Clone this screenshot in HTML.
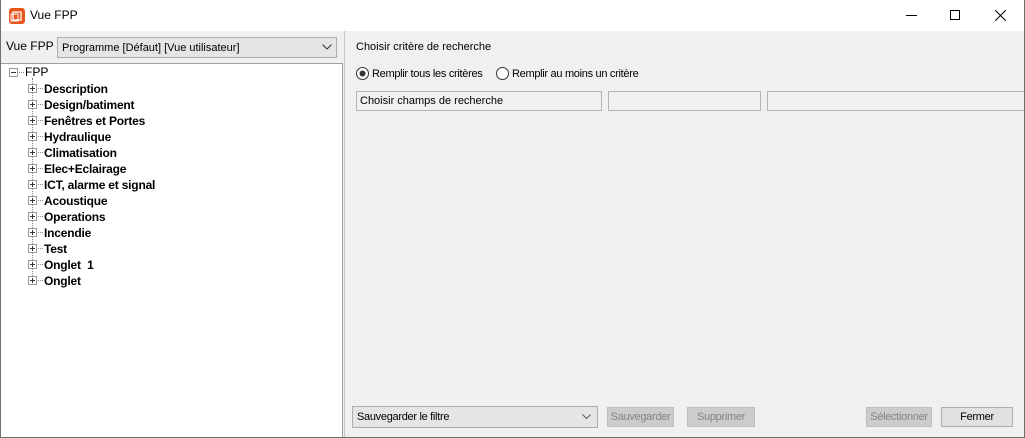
<!DOCTYPE html>
<html><head><meta charset="utf-8"><style>
*{margin:0;padding:0;box-sizing:border-box}
body{width:1025px;height:438px;overflow:hidden;background:#f0f0f0;font-family:"Liberation Sans",Arial,sans-serif;font-size:11px;color:#000;position:relative}
.abs{position:absolute;white-space:nowrap}
#win{position:absolute;left:0;top:0;width:1025px;height:438px;border:1px solid #707070;border-top:none}
#title{position:absolute;left:0;top:0;width:1025px;height:31px;background:#fff}
.item{position:absolute;left:44px;font-weight:bold;font-size:12px;letter-spacing:-0.2px;white-space:nowrap}
.pm{position:absolute;left:28px;width:9px;height:9px;border:1px solid #999;background:#fff}
.pm:before{content:"";position:absolute;left:1px;top:3px;width:5px;height:1px;background:#333}
.pm.p:after{content:"";position:absolute;left:3px;top:1px;width:1px;height:5px;background:#333}
.dh{position:absolute;left:38px;width:5px;border-top:1px dotted #888}
.box{position:absolute;top:91px;height:20px;border:1px solid #b4b4b4;background:#f0f0f0;padding:3px 3px;font-size:11px;white-space:nowrap}
.btn{position:absolute;top:407px;height:20px;border:1px solid #bfbfbf;background:#ccc;color:#838383;text-align:center;line-height:18px;font-size:11px;white-space:nowrap;letter-spacing:-0.3px}
</style></head><body>
<div id="title">
<svg class="abs" style="left:9px;top:8px" width="16" height="16"><rect x="0" y="0" width="16" height="16" rx="3" fill="#e8541c"/><rect x="4" y="4" width="8" height="8" fill="none" stroke="#fff" stroke-width="1.3"/><rect x="2" y="6" width="7" height="7" fill="none" stroke="#fff" stroke-width="1"/></svg>
<div class="abs" style="left:30px;top:8px;font-size:12px">Vue FPP</div>
<div class="abs" style="left:906px;top:15px;width:11px;height:1px;background:#000"></div>
<div class="abs" style="left:950px;top:10px;width:10px;height:10px;border:1px solid #000"></div>
<svg class="abs" style="left:995px;top:10px" width="11" height="11"><path d="M0 0L11 11M11 0L0 11" stroke="#000" stroke-width="1"/></svg>
</div>
<div class="abs" style="left:6px;top:39px;font-size:12px">Vue FPP</div>
<div class="abs" style="left:57px;top:37px;width:280px;height:21px;border:1px solid #adadad;background:#e5e5e5;padding:4px 4px;font-size:11px">Programme [Défaut] [Vue utilisateur]</div>
<svg class="abs" style="left:322px;top:44px" width="10" height="6"><path d="M0.5 0.5L5 5L9.5 0.5" stroke="#333" fill="none"/></svg>
<div class="abs" style="left:1px;top:63px;width:342px;height:374px;background:#fff;border-top:1px solid #a0a0a0;border-right:1px solid #a0a0a0"></div>
<div class="abs" style="left:344px;top:31px;width:1px;height:407px;background:#c8c8c8"></div>
<div class="pm" style="left:9px;top:68px"></div>
<div class="dh" style="left:19px;top:72px;width:5px"></div>
<div class="abs" style="left:25px;top:65px;font-size:12px">FPP</div>
<div class="abs" style="left:32px;top:78px;height:202px;border-left:1px dotted #888"></div>
<div style="position:absolute;left:0;top:0">
<div class="pm p" style="top:84px"></div><div class="dh" style="top:88px"></div><div class="item" style="top:82px">Description</div>
<div class="pm p" style="top:100px"></div><div class="dh" style="top:104px"></div><div class="item" style="top:98px">Design/batiment</div>
<div class="pm p" style="top:116px"></div><div class="dh" style="top:120px"></div><div class="item" style="top:114px">Fenêtres et Portes</div>
<div class="pm p" style="top:132px"></div><div class="dh" style="top:136px"></div><div class="item" style="top:130px">Hydraulique</div>
<div class="pm p" style="top:148px"></div><div class="dh" style="top:152px"></div><div class="item" style="top:146px">Climatisation</div>
<div class="pm p" style="top:164px"></div><div class="dh" style="top:168px"></div><div class="item" style="top:162px">Elec+Eclairage</div>
<div class="pm p" style="top:180px"></div><div class="dh" style="top:184px"></div><div class="item" style="top:178px">ICT, alarme et signal</div>
<div class="pm p" style="top:196px"></div><div class="dh" style="top:200px"></div><div class="item" style="top:194px">Acoustique</div>
<div class="pm p" style="top:212px"></div><div class="dh" style="top:216px"></div><div class="item" style="top:210px">Operations</div>
<div class="pm p" style="top:228px"></div><div class="dh" style="top:232px"></div><div class="item" style="top:226px">Incendie</div>
<div class="pm p" style="top:244px"></div><div class="dh" style="top:248px"></div><div class="item" style="top:242px">Test</div>
<div class="pm p" style="top:260px"></div><div class="dh" style="top:264px"></div><div class="item" style="top:258px">Onglet &nbsp;1</div>
<div class="pm p" style="top:276px"></div><div class="dh" style="top:280px"></div><div class="item" style="top:274px">Onglet</div>
</div>
<div class="abs" style="left:356px;top:41px">Choisir critère de recherche</div>
<svg class="abs" style="left:356px;top:67px" width="13" height="13"><circle cx="6.5" cy="6.5" r="6" fill="#fff" stroke="#333"/><circle cx="6.5" cy="6.5" r="3" fill="#333"/></svg>
<div class="abs" style="left:372px;top:68px;letter-spacing:-0.3px">Remplir tous les critères</div>
<svg class="abs" style="left:496px;top:67px" width="13" height="13"><circle cx="6.5" cy="6.5" r="6" fill="#fff" stroke="#333"/></svg>
<div class="abs" style="left:512px;top:68px;letter-spacing:-0.3px">Remplir au moins un critère</div>
<div class="box" style="left:356px;width:246px">Choisir champs de recherche</div>
<div class="box" style="left:608px;width:153px"></div>
<div class="box" style="left:767px;width:260px"></div>
<div class="abs" style="left:352px;top:406px;width:246px;height:22px;border:1px solid #adadad;background:#e5e5e5;padding:4px 4px;letter-spacing:-0.3px">Sauvegarder le filtre</div>
<svg class="abs" style="left:582px;top:414px" width="9" height="5"><path d="M0.5 0.5L4.5 4.5L8.5 0.5" stroke="#555" fill="none"/></svg>
<div class="btn" style="left:607px;width:67px">Sauvegarder</div>
<div class="btn" style="left:687px;width:68px">Supprimer</div>
<div class="btn" style="left:866px;width:66px">Sélectionner</div>
<div class="btn" style="left:941px;width:72px;background:#e1e1e1;border-color:#adadad;color:#000">Fermer</div>
<div id="win"></div>
</body></html>
